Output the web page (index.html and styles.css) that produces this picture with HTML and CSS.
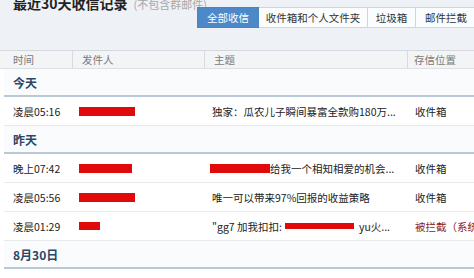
FILE: index.html
```html
<!DOCTYPE html>
<html lang="zh-CN">
<head>
<meta charset="utf-8">
<link rel="stylesheet" href="styles.css">
</head>
<body>
<div class="page">
  <div class="top">
    <div class="title"><span class="title-main">最近30天收信记录</span><span class="title-note">(不包含群邮件)</span></div>
    <div class="tabs">
      <div class="tab tab-active">全部收信</div>
      <div class="tab tab-w1">收件箱和个人文件夹</div>
      <div class="tab tab-w2">垃圾箱</div>
      <div class="tab tab-w3">邮件拦截</div>
    </div>
  </div>
  <div class="thead">
    <div class="th th-time">时间</div>
    <div class="th th-from">发件人</div>
    <div class="th th-subj">主题</div>
    <div class="th th-loc">存信位置</div>
  </div>
  <div class="tbody">
    <div class="group">今天</div>
    <div class="row">
      <div class="c-time">凌晨05:16</div>
      <div class="c-from"><span class="redact r56"></span></div>
      <div class="c-subj">独家：瓜农儿子瞬间暴富全款购180万...</div>
      <div class="c-loc">收件箱</div>
    </div>
    <div class="group">昨天</div>
    <div class="row">
      <div class="c-time">晚上07:42</div>
      <div class="c-from"><span class="redact r53"></span></div>
      <div class="c-subj"><span class="redact r60 subj-red"></span>给我一个相知相爱的机会...</div>
      <div class="c-loc">收件箱</div>
    </div>
    <div class="row">
      <div class="c-time">凌晨05:56</div>
      <div class="c-from"><span class="redact r56"></span></div>
      <div class="c-subj">唯一可以带来97%回报的收益策略</div>
      <div class="c-loc">收件箱</div>
    </div>
    <div class="row">
      <div class="c-time">凌晨01:29</div>
      <div class="c-from"><span class="redact r21"></span></div>
      <div class="c-subj">"gg7 加我扣扣:<span class="redact r69 thin"></span> yu火...</div>
      <div class="c-loc c-blocked">被拦截（系统拦截）</div>
    </div>
    <div class="group">8月30日</div>
    <div class="row">
      <div class="c-time">凌晨00:12</div>
      <div class="c-from"><span class="redact r56"></span></div>
      <div class="c-subj">您的订阅内容已经更新</div>
      <div class="c-loc">收件箱</div>
    </div>
  </div>
</div>
</body>
</html>
```

FILE: styles.css
```css
html, body {
  margin: 0;
  padding: 0;
  overflow: hidden;
  background: #ffffff;
}
.page {
  width: 560px;
  font-family: "Noto Sans CJK SC", "Noto Sans", sans-serif;
  font-size: 10.5px;
  color: #222222;
}
.top {
  display: flex;
  align-items: flex-start;
  height: 50px;
  background: #eef2f7;
}
.title {
  width: 184px;
  padding-left: 13px;
  margin-top: -7px;
  line-height: 20px;
  white-space: nowrap;
}
.title-main {
  font-size: 14px;
  font-weight: bold;
  color: #222222;
}
.title-note {
  margin-left: 6px;
  font-size: 11px;
  color: #a8a8a8;
}
.tabs {
  display: flex;
  margin-top: 7px;
}
.tab {
  height: 19px;
  line-height: 19px;
  border: 1px solid #cdd5de;
  border-left: none;
  background: #fbfcfd;
  text-align: center;
  color: #333333;
  font-size: 10.5px;
}
.tab-active {
  width: 60px;
  border: 1px solid #4a84c4;
  background: #4d89c9;
  color: #ffffff;
}
.tab-w1 { width: 108px; }
.tab-w2 { width: 47px; }
.tab-w3 { width: 60px; }
.thead {
  display: grid;
  grid-template-columns: 72px 132px 203px 1fr;
  height: 17px;
  border-top: 1px solid #d4d7db;
  border-bottom: 1px solid #dcdfe3;
  background: #f3f4f5;
  line-height: 17px;
  color: #7a7a7a;
}
.th { padding-left: 9px; }
.th + .th { border-left: 1px solid #d8dadd; }
.th-time { padding-left: 13px; }
.th-loc { padding-left: 6px; }
.tbody {
  margin-left: 4px;
}
.group {
  height: 26px;
  line-height: 27px;
  padding-left: 9px;
  border-bottom: 2px solid #b9c7d6;
  background: #fafbfc;
  font-size: 12px;
  font-weight: bold;
  color: #2a4766;
}
.row {
  display: grid;
  grid-template-columns: 68px 132px 203px 1fr;
  height: 28px;
  align-items: center;
  border-bottom: 1px solid #e8e9eb;
  white-space: nowrap;
}
.c-time { padding-left: 9px; }
.c-from { padding-left: 7px; display: flex; align-items: center; }
.c-subj { padding-left: 8px; display: flex; align-items: center; }
.c-loc { padding-left: 8px; }
.c-blocked { color: #8a2020; }
.redact {
  display: inline-block;
  height: 9px;
  background: #e00a0a;
}
.thin { height: 6px; margin: 0 5px 0 3px; }
.subj-red { margin-left: -2px; }
.r56 { width: 56px; }
.r53 { width: 53px; }
.r21 { width: 21px; height: 8px; }
.r60 { width: 60px; }
.r69 { width: 69px; }
```
